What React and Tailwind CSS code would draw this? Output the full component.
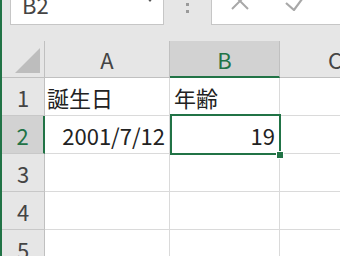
import React from "react";

const rows = [
  { n: 1, a: "誕生日", b: "年齢" },
  { n: 2, a: "2001/7/12", b: "19", sel: true },
  { n: 3 },
  { n: 4 },
  { n: 5 },
];

function App() {
  return (
    <div className="relative w-[340px] h-[256px] overflow-hidden bg-[#e6e6e6] border-l-2 border-[#217346] font-['Noto_Sans_CJK_JP','Noto_Sans',sans-serif] text-[22px] leading-none">
      {/* formula bar */}
      <div className="relative flex items-start h-[41px]">
        <div className="relative -mt-[12px] ml-[8px] w-[154px] h-[37px] bg-white border border-[#c6c6c6] pl-[11px] pt-[4px] text-[#444]">
          B2
          <svg className="absolute left-[134px] top-[6px]" width="10" height="10" viewBox="0 0 10 10">
            <path d="M1 2 L9 2 L5 7 Z" fill="#555" />
          </svg>
        </div>
        <div className="flex flex-col gap-[4px] ml-[22px] -mt-[4px]">
          <span className="w-[3px] h-[3px] bg-[#9a9a9a]" />
          <span className="w-[3px] h-[3px] bg-[#9a9a9a]" />
          <span className="w-[3px] h-[3px] bg-[#9a9a9a]" />
        </div>
        <div className="relative -mt-[12px] ml-[22px] flex-1 h-[37px] bg-white border-l border-b border-[#c6c6c6]">
          <svg className="absolute left-[18px] top-[3px]" width="20" height="20" viewBox="0 0 20 20">
            <path d="M2 2 L18 18 M18 2 L2 18" stroke="#a8a8a8" strokeWidth="2" fill="none" />
          </svg>
          <svg className="absolute left-[72px] top-[1px]" width="22" height="22" viewBox="0 0 22 22">
            <path d="M2 14 L10 21 L21 6" stroke="#a8a8a8" strokeWidth="2.2" fill="none" />
          </svg>
        </div>
      </div>

      {/* sheet grid */}
      <div className="grid grid-cols-[43px_125px_110px_110px]">
        <div className="relative h-[37px] border-r border-b border-[#c0c0c0]">
          <svg className="absolute left-[13px] top-[7px]" width="26" height="25" viewBox="0 0 26 25">
            <path d="M25 0 L25 25 L0 25 Z" fill="#bdbdbd" />
          </svg>
        </div>
        <div className="h-[37px] flex items-center justify-center border-r border-b border-[#c0c0c0] text-[#444]">A</div>
        <div className="h-[37px] flex items-center justify-center bg-[#d2d2d2] border-r border-[#c0c0c0] border-b-2 border-b-[#217346] text-[#217346]">B</div>
        <div className="h-[37px] flex items-center justify-center border-b border-[#c0c0c0] text-[#444]">C</div>

        {rows.map((r) => (
          <React.Fragment key={r.n}>
            <div
              className={`h-[38px] flex items-center justify-center border-b border-[#c8c8c8] ${
                r.sel
                  ? "bg-[#d2d2d2] text-[#217346] border-r-2 border-r-[#217346]"
                  : "text-[#444] border-r border-r-[#c0c0c0]"
              }`}
            >
              {r.n}
            </div>
            <div
              className={`h-[38px] flex items-center bg-white border-r border-b border-[#dadada] text-[#222] ${
                r.sel ? "justify-end pr-[4px]" : "pl-[2px]"
              }`}
            >
              {r.a}
            </div>
            <div
              className={`h-[38px] flex items-center bg-white border-r border-b border-[#dadada] text-[#222] ${
                r.sel ? "justify-end pr-[4px]" : "pl-[4px]"
              }`}
            >
              {r.b}
            </div>
            <div className="h-[38px] bg-white border-b border-[#dadada]" />
          </React.Fragment>
        ))}
      </div>

      {/* active cell */}
      <div className="absolute left-[168px] top-[114px] w-[111px] h-[41px] border-2 border-[#217346]" />
      <div className="absolute left-[274px] top-[151px] w-[8px] h-[8px] bg-[#217346] border border-white" />
    </div>
  );
}

export default App;
